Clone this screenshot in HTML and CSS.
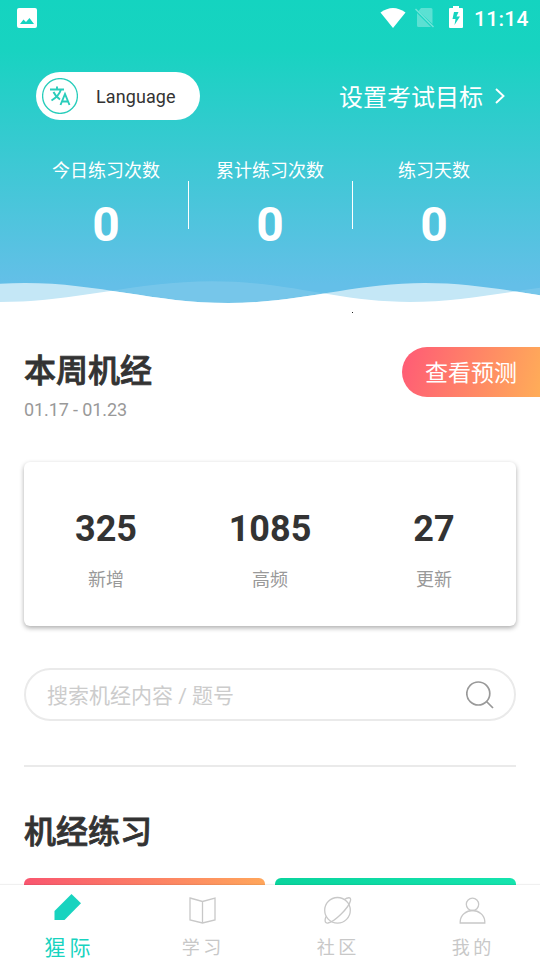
FILE: index.html
```html
<!DOCTYPE html>
<html lang="zh-CN">
<head>
<meta charset="utf-8">
<title>猩际</title>
<link rel="stylesheet" href="styles.css">
</head>
<body>
<div class="screen">
  <header class="hero">
    <div class="status">
      <svg class="status-photo" width="20" height="20" viewBox="0 0 20 20"><path fill="#fff" fill-rule="evenodd" d="M2 0h16a2 2 0 0 1 2 2v16a2 2 0 0 1-2 2H2a2 2 0 0 1-2-2V2a2 2 0 0 1 2-2zM3 16h14l-4.500-6-3.500 4-2.500-2.500z"/></svg>
      <svg width="26" height="21" viewBox="0 0 26 21"><path fill="#fff" d="M.5 4.500Q13-4.500 25.500 4.500L13 20z"/></svg>
      <svg class="status-sim" width="20" height="21" viewBox="0 0 20 21"><path fill="#fff" fill-opacity=".3" d="M6 0h10a1.500 1.500 0 0 1 1.500 1.500V16L3.500 3zM2 5l14 14H3.500A1.500 1.500 0 0 1 2 17.500z"/><path stroke="#fff" stroke-opacity=".4" stroke-width="1.500" d="M.5 1l18 18"/></svg>
      <svg class="status-battery" width="14" height="22" viewBox="0 0 14 22"><path fill="#fff" fill-rule="evenodd" d="M4 0h6v2h3a1 1 0 0 1 1 1v18a1 1 0 0 1-1 1H1a1 1 0 0 1-1-1V3a1 1 0 0 1 1-1h3zM5 6L3.500 13h3L5.500 19 11 10.500H7.500L9.500 6z"/></svg>
      <span class="clock">11:14</span>
    </div>
    <div class="top-row">
      <div class="language">
        <svg width="36" height="36" viewBox="0 0 36 36" fill="none" stroke="#29cdbb"><circle cx="18" cy="18" r="17.400" stroke-width="1.300"/><path stroke-width="1.900" d="M8 11.500h14M15 8.500v3M19 11.500Q17 18 9.500 22.500M11.500 14Q13.500 18.500 18 21.500M18.500 27l4.500-11 4.500 11M20 23.500h6"/></svg>
        <span>Language</span>
      </div>
      <div class="goal">
        <span>设置考试目标</span>
        <svg width="10" height="16" viewBox="0 0 10 16" fill="none" stroke="#fff" stroke-width="1.900"><path d="M1 1l7.500 7L1 15"/></svg>
      </div>
    </div>
    <div class="stats">
      <div class="stat"><span>今日练习次数</span><b>0</b></div>
      <div class="stat"><span>累计练习次数</span><b>0</b></div>
      <div class="stat"><span>练习天数</span><b>0</b></div>
    </div>
    <svg class="waves" width="540" height="40" viewBox="0 0 540 40">
      <defs>
        <clipPath id="front"><path d="M0 13.800Q12 13 25 13C99 13 154 33 228 33S353 13 425 13 554 33 628 33V40H0z"/></clipPath>
      </defs>
      <path fill="#fff" fill-opacity=".12" d="M0 32C77 32 135 11.300 212 11.300S338 32 410 32 545 11.300 622 11.300V40H0z"/>
      <path fill="#fff" fill-opacity=".62" d="M0 13.800Q12 13 25 13C99 13 154 33 228 33S353 13 425 13 554 33 628 33V40H0z"/>
      <path clip-path="url(#front)" fill="#fff" d="M0 32C77 32 135 11.300 212 11.300S338 32 410 32 545 11.300 622 11.300V40H0z"/>
    </svg>
  </header>
  <main class="content">
    <i class="dot"></i>
    <section class="week">
      <div>
        <h2>本周机经</h2>
        <p class="date">01.17 - 01.23</p>
      </div>
      <div class="forecast">查看预测</div>
    </section>
    <section class="card">
      <div class="count"><b>325</b><span>新增</span></div>
      <div class="count"><b>1085</b><span>高频</span></div>
      <div class="count"><b>27</b><span>更新</span></div>
    </section>
    <div class="search">
      <span>搜索机经内容 / 题号</span>
      <svg width="28" height="28" viewBox="0 0 28 28" fill="none" stroke="#999" stroke-width="1.700"><circle cx="12.300" cy="12.500" r="11.500"/><path d="M20.500 20.500l6.500 6.500"/></svg>
    </div>
    <h2 class="practice-title">机经练习</h2>
    <div class="tiles"><div class="tile tile-warm"></div><div class="tile tile-green"></div></div>
  </main>
  <nav class="tabs">
    <div class="tab active">
      <svg width="28" height="28" viewBox="0 0 28 28"><path fill="#18d3bf" d="M17.500 0L27 9.300 10.500 26H.5V17z"/></svg>
      <span>猩 际</span>
    </div>
    <div class="tab">
      <svg width="28" height="28" viewBox="0 0 28 28" fill="none" stroke="#c8c8c8" stroke-width="1.300"><path d="M1 2L13.500 5.500 26 2v22L13.500 27 1 24zM13.500 5.500V27"/></svg>
      <span>学 习</span>
    </div>
    <div class="tab">
      <svg width="28" height="28" viewBox="0 0 28 28" fill="none" stroke="#c8c8c8" stroke-width="1.300"><circle cx="13.500" cy="14.300" r="12.800"/><path d="M20.500 3.500C23 1.500 27.500 .5 26.500 4.500 25 12 10 26 4 27 0 27.500 1 23 2 20.500"/></svg>
      <span>社 区</span>
    </div>
    <div class="tab">
      <svg width="28" height="28" viewBox="0 0 28 28" fill="none" stroke="#c8c8c8" stroke-width="1.300"><circle cx="13.500" cy="8.300" r="6.200"/><path d="M1.200 27v-1.500C1.500 19 7.500 14.500 13.500 14.500S25.500 19 25.800 25.500V27z"/></svg>
      <span>我 的</span>
    </div>
  </nav>
</div>
</body>
</html>
```
FILE: styles.css
```css
* { box-sizing: border-box; margin: 0; padding: 0; }
body { background: #fff; font-family: Roboto, "Noto Sans CJK SC", sans-serif; color: #333; }
svg { display: block; flex: none; }
.screen { width: 540px; height: 960px; display: flex; flex-direction: column; overflow: hidden; }
.hero { height: 310px; flex: none; background: linear-gradient(#14d4c0 0, #18d3c1 50px, #2fcccd 120px, #64bfe8 285px, #64bfe8 303px, #fff 303px); }
.status { height: 36px; display: flex; align-items: center; padding: 0 12px 0 17px; }
.status-photo { margin-right: auto; }
.status-sim { margin-left: 9px; }
.status-battery { margin: -2px 0 0 14px; }
.clock { margin-left: 11px; width: 54px; font-size: 21px; font-weight: 500; line-height: 38px; padding-top: 1px; color: #fff; white-space: nowrap; letter-spacing: .3px; }
.top-row { margin-top: 36px; height: 48px; padding: 0 35px 0 36px; display: flex; justify-content: space-between; align-items: center; }
.language { width: 164px; height: 48px; border-radius: 24px; background: #fff; display: flex; align-items: center; padding-left: 6px; gap: 18px; font-size: 18px; letter-spacing: .1px; }
.goal { display: flex; align-items: center; gap: 12px; color: #fff; font-size: 24px; }
.goal span { padding-bottom: 2px; }
.stats { height: 150px; padding: 35px 24px 0; display: flex; }
.stat { flex: 1; display: flex; flex-direction: column; align-items: center; color: #fff; position: relative; }
.stat span { font-size: 18px; line-height: 32px; }
.stat b { font-size: 48px; line-height: 56px; margin-top: 10px; }
.stat + .stat::before { content: ""; position: absolute; left: 0; top: 26px; width: 1px; height: 48px; background: #fff; }
.content { height: 575px; flex: none; overflow: hidden; }
.dot { display: block; width: 1px; height: 1px; margin: 2px 0 0 352px; background: #222; }
.week { height: 149px; padding: 34px 0 0 24px; display: flex; justify-content: space-between; }
h2 { font-size: 32px; line-height: 48px; font-weight: 500; -webkit-text-stroke: .8px #333; }
.date { font-size: 18px; line-height: 24px; color: #999; margin-top: 3px; letter-spacing: -.1px; }
.forecast { width: 138px; height: 50px; border-radius: 25px 0 0 25px; background: linear-gradient(105deg, #ff5a76, #ffad58); color: #fff; font-size: 23px; line-height: 53px; padding-left: 23px; }
.card { width: 492px; height: 164px; margin-left: 24px; border-radius: 6px; background: #fff; box-shadow: 0 2px 5px rgba(0,0,0,.33); display: flex; padding-top: 42px; }
.count { flex: 1; display: flex; flex-direction: column; align-items: center; }
.count b { font-size: 36px; line-height: 50px; }
.count span { font-size: 18px; line-height: 26px; margin-top: 13px; color: #999; }
.search { margin: 42px 24px 0; height: 53px; border: 2px solid #eaeaea; border-radius: 27px; display: flex; align-items: center; justify-content: space-between; padding: 0 20px 0 21px; color: #ccc; font-size: 21px; }
.search span { padding-bottom: 1px; }
.practice-title { margin: 44px 24px 0; padding-top: 41px; border-top: 2px solid #eaeaea; }
.tiles { display: flex; gap: 10px; padding: 22px 24px 0; }
.tile { flex: 1; height: 80px; border-radius: 6px; }
.tile-warm { background: linear-gradient(90deg, #f9566f, #ffa65b); }
.tile-green { background: linear-gradient(90deg, #09d49d, #15e4ae); }
.tabs { height: 75px; flex: none; position: relative; background: #fff; display: flex; box-shadow: 0 -1px 1px rgba(0,0,0,.06); }
.tab { flex: 1; display: flex; flex-direction: column; align-items: center; padding-top: 11px; color: #c8c8c8; font-size: 18px; }
.tab span { line-height: 26px; margin: 11px 2px 0 0; word-spacing: -1px; }
.tab.active { color: #18d3bf; font-size: 21px; padding-top: 9px; }
.tab.active span { margin: 13px 0 0; }
```
